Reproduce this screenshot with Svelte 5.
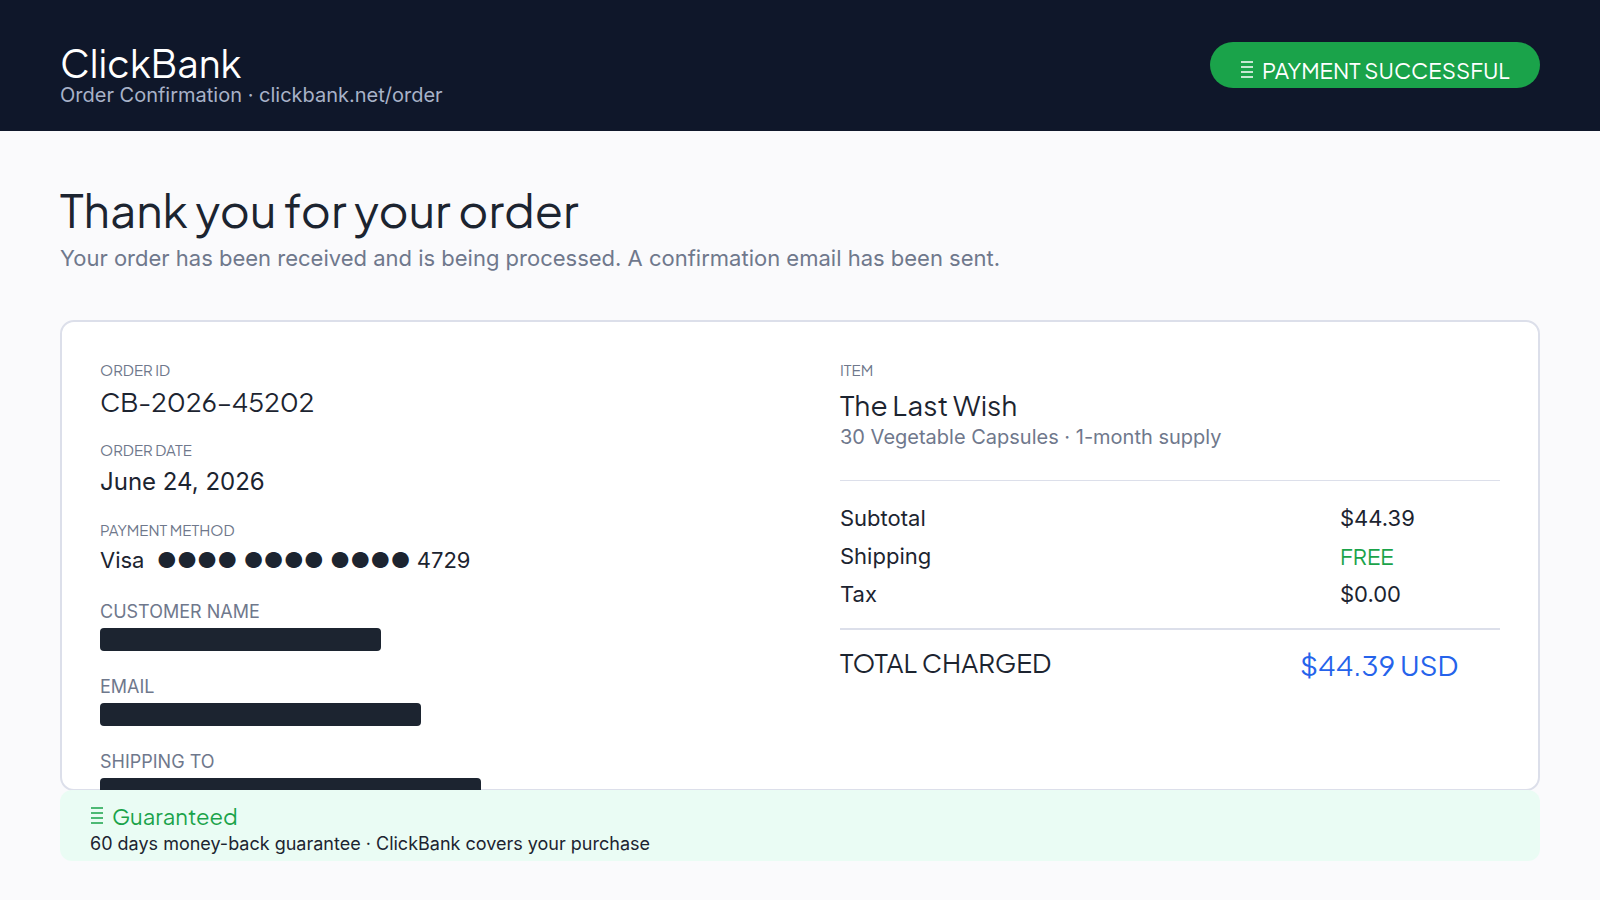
<script>
	const redacted = [
		{ label: 'CUSTOMER NAME', width: 281 },
		{ label: 'EMAIL', width: 321 },
		{ label: 'SHIPPING TO', width: 381 }
	];

	const charges = [
		{ label: 'Subtotal', value: '$44.39' },
		{ label: 'Shipping', value: 'FREE', free: true },
		{ label: 'Tax', value: '$0.00' }
	];
</script>

{#snippet bars()}
	<svg class="bars" viewBox="0 0 13 18" aria-hidden="true">
		<path d="M1 1h12M1 6h12M1 11h12M1 16h12" />
	</svg>
{/snippet}

<header>
	<div>
		<h1>ClickBank</h1>
		<p class="site">Order Confirmation · clickbank.net/order</p>
	</div>
	<div class="badge">{@render bars()}PAYMENT SUCCESSFUL</div>
</header>

<main>
	<h2>Thank you for your order</h2>
	<p class="lead">Your order has been received and is being processed. A confirmation email has been sent.</p>

	<section class="card">
		<div class="details">
			<dl class="fields">
				<div>
					<dt>ORDER ID</dt>
					<dd class="order-id">CB-2026–45202</dd>
				</div>
				<div>
					<dt>ORDER DATE</dt>
					<dd class="date">June 24, 2026</dd>
				</div>
				<div>
					<dt>PAYMENT METHOD</dt>
					<dd class="method">Visa&nbsp; ●●●● ●●●● ●●●● 4729</dd>
				</div>
			</dl>
			<dl class="private">
				{#each redacted as field}
					<div>
						<dt>{field.label}</dt>
						<dd style="width: {field.width}px"></dd>
					</div>
				{/each}
			</dl>
		</div>

		<div class="summary">
			<p class="label">ITEM</p>
			<h3>The Last Wish</h3>
			<p class="variant">30 Vegetable Capsules · 1-month supply</p>

			<dl class="charges">
				{#each charges as row}
					<div>
						<dt>{row.label}</dt>
						<dd class:free={row.free}>{row.value}</dd>
					</div>
				{/each}
			</dl>
			<dl class="total">
				<dt>TOTAL CHARGED</dt>
				<dd>$44.39 USD</dd>
			</dl>
		</div>
	</section>

	<section class="guarantee">
		<h3>{@render bars()}Guaranteed</h3>
		<p>60 days money-back guarantee · ClickBank covers your purchase</p>
	</section>
</main>

<style>
	:global(body) {
		--ink: #1c2430;
		--muted: #6f788c;
		--line: #dcdfea;
		--green: #1aa34a;
		--display: 'Plus Jakarta Sans', Inter, sans-serif;
		background: #fafafc;
		color: var(--ink);
		font-family: Inter, sans-serif;
	}

	h1,
	h2,
	h3,
	p,
	dl,
	dd {
		margin: 0;
	}

	h1,
	h2,
	h3 {
		font-family: var(--display);
		font-weight: 400;
	}

	header {
		display: flex;
		justify-content: space-between;
		align-items: flex-start;
		padding: 42px 60px 25px;
		background: #0f172a;
		color: #fff;
	}

	h1 {
		font-size: 38px;
		line-height: 42px;
	}

	.site {
		font-size: 20px;
		line-height: 22px;
		color: #a8b2c8;
	}

	.badge {
		display: flex;
		align-items: center;
		gap: 9px;
		padding: 15px 30px 5px;
		border-radius: 23px;
		background: var(--green);
		font-family: var(--display);
		font-size: 22px;
		line-height: 26px;
	}

	.bars {
		flex: none;
		width: 13px;
		height: 18px;
		fill: none;
		stroke: currentColor;
		stroke-width: 1.6;
	}

	main {
		padding: 50px 60px 39px;
	}

	h2 {
		font-size: 46px;
		line-height: 56px;
	}

	.lead {
		margin: 8px 0 49px;
		font-size: 22px;
		line-height: 26px;
		color: var(--muted);
	}

	.card {
		display: grid;
		grid-template-columns: 1fr 1fr;
		gap: 80px;
		padding: 38px 38px 0;
		border: 2px solid var(--line);
		border-radius: 14px;
		background: #fff;
	}

	/* the last field runs under the guarantee banner */
	.details {
		margin-bottom: -12px;
	}

	.fields {
		display: grid;
		gap: 20px;
	}

	.fields dt,
	.label {
		margin-bottom: 4px;
		font-family: var(--display);
		font-size: 15px;
		line-height: 20px;
		color: var(--muted);
	}

	.fields dd {
		line-height: 36px;
	}

	.fields .order-id {
		font-family: var(--display);
		font-size: 26px;
	}

	.fields .date {
		font-size: 24px;
	}

	.fields .method {
		font-size: 22px;
		line-height: 32px;
	}

	.private {
		display: grid;
		gap: 24px;
		margin-top: 24px;
	}

	.private dt {
		margin-bottom: 4px;
		font-size: 18px;
		line-height: 24px;
		color: var(--muted);
	}

	.private dd {
		height: 23px;
		border-radius: 4px;
		background: var(--ink);
	}

	.summary h3 {
		font-size: 28px;
		line-height: 42px;
	}

	.variant {
		font-size: 20px;
		line-height: 22px;
		color: var(--muted);
	}

	.charges {
		margin-top: 32px;
		padding: 18px 0 15px;
		border-top: 1px solid var(--line);
		font-size: 22px;
		line-height: 38px;
	}

	.charges div,
	.total {
		display: flex;
		justify-content: space-between;
	}

	.charges dd {
		width: 160px;
	}

	.charges .free {
		font-family: var(--display);
		color: var(--green);
	}

	.total {
		padding-top: 13px;
		border-top: 2px solid var(--line);
		font-family: var(--display);
		font-size: 26px;
		line-height: 40px;
	}

	.total dd {
		width: 200px;
		font-size: 28px;
		line-height: 44px;
		color: #2563eb;
	}

	.guarantee {
		position: relative;
		margin-top: -1px;
		padding: 11px 30px 4px;
		border-radius: 12px;
		background: #eafcf4;
	}

	.guarantee h3 {
		display: flex;
		align-items: center;
		gap: 9px;
		font-size: 22px;
		line-height: 30px;
		color: var(--green);
	}

	.guarantee p {
		font-size: 18px;
		line-height: 26px;
	}
</style>
